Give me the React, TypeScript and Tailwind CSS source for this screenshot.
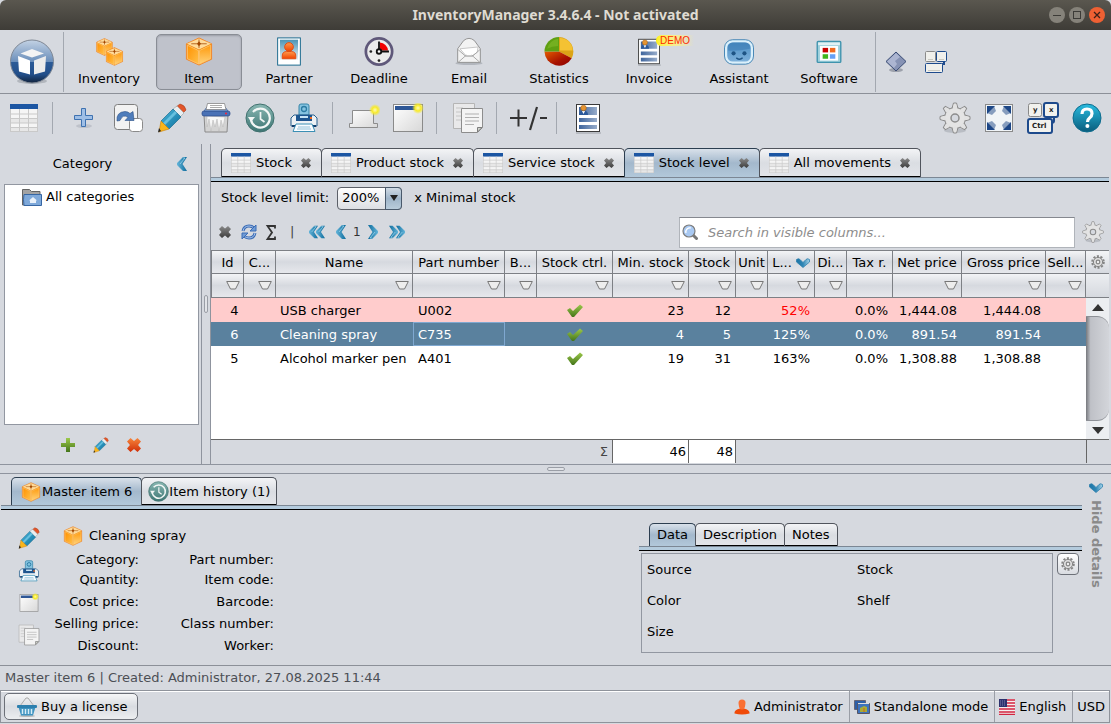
import React from 'react';

interface IconProps {
    className?: string;
}

// Gradients shared by all icons, referenced by id
const IconDefs: React.FC = () => (
    <svg className="absolute h-0 w-0" aria-hidden="true">
        <defs>
            <linearGradient id="blueOrb" x1="0" y1="0" x2="0" y2="1">
                <stop offset="0" stopColor="#c3d2e4" />
                <stop offset="0.5" stopColor="#6b8fbb" />
                <stop offset="0.52" stopColor="#2c5b97" />
                <stop offset="0.8" stopColor="#234f8a" />
                <stop offset="1" stopColor="#12233c" />
            </linearGradient>
            <linearGradient id="pencilBody" x1="0" y1="0" x2="1" y2="1">
                <stop offset="0" stopColor="#4cb8dc" />
                <stop offset="1" stopColor="#0d6f9c" />
            </linearGradient>
            <linearGradient id="orange" x1="0" y1="0" x2="1" y2="1">
                <stop offset="0" stopColor="#ff9100" />
                <stop offset="1" stopColor="#ffc04a" />
            </linearGradient>
            <linearGradient id="orangeLight" x1="0" y1="0" x2="0" y2="1">
                <stop offset="0" stopColor="#ff9a0c" />
                <stop offset="1" stopColor="#ffd27a" />
            </linearGradient>
            <linearGradient id="person" x1="0" y1="0" x2="0" y2="1">
                <stop offset="0" stopColor="#ff9a4d" />
                <stop offset="1" stopColor="#f04400" />
            </linearGradient>
            <linearGradient id="sky" x1="0" y1="0" x2="0" y2="1">
                <stop offset="0" stopColor="#4c94b4" />
                <stop offset="1" stopColor="#e4eff4" />
            </linearGradient>
            <linearGradient id="paper" x1="0" y1="0" x2="1" y2="1">
                <stop offset="0" stopColor="#ffffff" />
                <stop offset="1" stopColor="#d8d8d8" />
            </linearGradient>
            <linearGradient id="teal" x1="0" y1="0" x2="0" y2="1">
                <stop offset="0" stopColor="#8ab8b3" />
                <stop offset="1" stopColor="#3c7573" />
            </linearGradient>
            <linearGradient id="help" x1="0" y1="0" x2="0" y2="1">
                <stop offset="0" stopColor="#29bce0" />
                <stop offset="1" stopColor="#0a5c7c" />
            </linearGradient>
            <linearGradient id="green" x1="0" y1="0" x2="0" y2="1">
                <stop offset="0" stopColor="#9cc94a" />
                <stop offset="1" stopColor="#44751a" />
            </linearGradient>
            <linearGradient id="redCross" x1="0" y1="0" x2="0" y2="1">
                <stop offset="0" stopColor="#f7853b" />
                <stop offset="1" stopColor="#d02f08" />
            </linearGradient>
            <linearGradient id="chevron" x1="0" y1="0" x2="1" y2="0">
                <stop offset="0" stopColor="#65b5d9" />
                <stop offset="1" stopColor="#0d6b9c" />
            </linearGradient>
            <linearGradient id="chevronDown" x1="0" y1="0" x2="1" y2="0">
                <stop offset="0" stopColor="#1b74a6" />
                <stop offset="0.5" stopColor="#2f86b5" />
                <stop offset="1" stopColor="#a5d3e8" />
            </linearGradient>
            <linearGradient id="grayCross" x1="0" y1="0" x2="0" y2="1">
                <stop offset="0" stopColor="#8a8a8a" />
                <stop offset="1" stopColor="#3c3c3c" />
            </linearGradient>
            <linearGradient id="robot" x1="0" y1="0" x2="0" y2="1">
                <stop offset="0" stopColor="#4c8fc4" />
                <stop offset="1" stopColor="#7db0da" />
            </linearGradient>
            <linearGradient id="pieRed" x1="0" y1="0" x2="1" y2="1">
                <stop offset="0" stopColor="#e25a00" />
                <stop offset="0.6" stopColor="#a81200" />
                <stop offset="1" stopColor="#8a0000" />
            </linearGradient>
            <linearGradient id="bar" x1="0" y1="0" x2="1" y2="0">
                <stop offset="0" stopColor="#3f659d" />
                <stop offset="1" stopColor="#97acca" />
            </linearGradient>
            <radialGradient id="glow">
                <stop offset="0" stopColor="#fffbb0" />
                <stop offset="0.5" stopColor="#f7ea2a" />
                <stop offset="1" stopColor="#f7ea2a" stopOpacity="0" />
            </radialGradient>
        </defs>
    </svg>
);

const LogoIcon: React.FC<IconProps> = ({ className }) => (
    <svg viewBox="0 0 46 46" className={className}>
        <ellipse cx="23" cy="42" rx="15" ry="3" fill="#8e939c" opacity="0.5" />
        <circle cx="23" cy="22.500" r="21.500" fill="url(#blueOrb)" stroke="#7e8794" />
        <path d="M11.500 14.500 23 10l12 4.500-12 4z" fill="#f4f4f4" />
        <path d="M9 17l12 4.500v14L10 32.500z" fill="#fff" />
        <path d="M37 17L25 21.500v14l11-3z" fill="#ececec" />
    </svg>
);

const BoxIcon: React.FC<IconProps> = ({ className }) => (
    <svg viewBox="0 0 28 30" className={className}>
        <path d="M14 1L27 7v16l-13 6L1 23V7z" fill="#f28a0c" stroke="#f0862a" strokeLinejoin="round" />
        <path d="M14 1.500L26.500 7 14 13 1.500 7z" fill="#ffdb9a" />
        <path d="M2 8.500l11.500 5.500v14L2 22.500z" fill="url(#orange)" stroke="#ffd390" strokeWidth="0.700" />
        <path d="M26 8.500L14.500 14v14L26 22.500z" fill="url(#orangeLight)" stroke="#ffd07c" strokeWidth="0.700" />
        <path d="M14 2.500v9M6 7h16" stroke="#a34700" strokeWidth="0.800" />
        <path d="M12 7l2-2.500L16 7l-2 2.500z" fill="#a34700" />
    </svg>
);

const BoxesIcon: React.FC<IconProps> = ({ className }) => (
    <svg viewBox="0 0 32 32" className={className}>
        <svg x="1" y="1" width="20" height="20"><BoxIcon /></svg>
        <svg x="12" y="11" width="20" height="21"><BoxIcon /></svg>
    </svg>
);

const PartnerIcon: React.FC<IconProps> = ({ className }) => (
    <svg viewBox="0 0 32 32" className={className}>
        <rect x="3.500" y="1" width="25" height="30" fill="#fff" stroke="#0a5f86" />
        <rect x="6" y="3" width="20" height="22" fill="url(#sky)" />
        <path d="M8.500 24v-3q0-5 5-5h5q5 0 5 5v3z" fill="url(#person)" stroke="#e04a10" />
        <circle cx="16" cy="11" r="4.800" fill="url(#person)" stroke="#e04a10" />
    </svg>
);

const DeadlineIcon: React.FC<IconProps> = ({ className }) => (
    <svg viewBox="0 0 32 32" className={className}>
        <circle cx="16" cy="16" r="14.500" fill="#ececec" stroke="#5f587a" strokeWidth="3" />
        <path d="M17 15V6a10 10 0 0 1 9 9z" fill="#f20000" />
        <path d="M16 14V5M18 16h9" stroke="#111" strokeWidth="2" />
        <circle cx="16" cy="16" r="2.500" fill="#fff" stroke="#111" strokeWidth="2" />
        <circle cx="16" cy="26" r="1.500" fill="#222" />
        <circle cx="7" cy="16" r="1.500" fill="#222" />
    </svg>
);

const EmailIcon: React.FC<IconProps> = ({ className }) => (
    <svg viewBox="0 0 32 32" className={className}>
        <ellipse cx="16" cy="29" rx="15" ry="2" fill="#8e939c" opacity="0.5" />
        <path d="M3.500 13L10 4q6-5 12 0l6.500 9v15h-25z" fill="#f3f3f3" stroke="#8c8c8c" />
        <path d="M6 13l20-2-1 6-6 4h-6z" fill="#fff" stroke="#c2c2c2" />
        <path d="M4 14l8 7h8l8-7M4 28l9-8M28 28l-9-8" fill="none" stroke="#a2a2a2" />
    </svg>
);

const StatisticsIcon: React.FC<IconProps> = ({ className }) => (
    <svg viewBox="0 0 32 32" className={className}>
        <path d="M16 16V0a16 16 0 0 1 14 23.500z" fill="#dca416" />
        <path d="M16 16l14 7.500A16 16 0 0 1 0 16z" fill="url(#pieRed)" />
        <path d="M16 16H0A16 16 0 0 1 16 0z" fill="#5fa012" />
        <path d="M17 15V1a14 14 0 0 1 14 14z" fill="#f4c233" />
        <path d="M15 2v8Q8 10 3 13 5 4 15 2z" fill="#82bb2a" opacity="0.6" />
    </svg>
);

const InvoiceIcon: React.FC<IconProps> = ({ className }) => (
    <svg viewBox="0 0 32 32" className={className}>
        <path d="M4 31h25" stroke="#9ca0a7" />
        <rect x="4.500" y="2.500" width="23" height="27" fill="#fff" stroke="#3a3a3a" />
        <path d="M7 5h18v8H7zM7 16h18v4H7zM7 23h18v4H7z" fill="url(#bar)" />
        <path d="M7 13q0-4.500 4.500-4.500T16 13z" fill="#2c599a" />
        <path d="M10 9h3l-1.500 3z" fill="#fff" />
        <circle cx="11.500" cy="6" r="2.800" fill="#e59432" stroke="#a35c0d" strokeWidth="0.500" />
    </svg>
);

const AssistantIcon: React.FC<IconProps> = ({ className }) => (
    <svg viewBox="0 0 34 32" className={className}>
        <rect x="1" y="3" width="32" height="27" rx="9" fill="#dbf0fb" stroke="#3a7eaf" />
        <rect x="4" y="6" width="26" height="21" rx="6" fill="url(#robot)" />
        <path d="M5 15V11q0-5 6-5h12q6 0 6 5v2q-14 3-24 2z" fill="#3d7db5" opacity="0.6" />
        <circle cx="11" cy="18" r="2.300" fill="#1e5484" />
        <circle cx="23" cy="18" r="2.300" fill="#1e5484" />
        <path d="M14 23q4 3 7 0" fill="none" stroke="#1e5484" strokeWidth="1.500" />
    </svg>
);

const SoftwareIcon: React.FC<IconProps> = ({ className }) => (
    <svg viewBox="0 0 32 32" className={className}>
        <rect x="3" y="5" width="26" height="23" rx="1" fill="#9fd0dc" stroke="#3f93ad" strokeWidth="1.500" />
        <path d="M4 6h24v3H4z" fill="#e1f1f4" />
        <rect x="6" y="10" width="20" height="16" fill="#fff" />
        <path d="M9 12h6v5H9z" fill="#c80000" />
        <path d="M17 12h6v5h-6z" fill="#f16a1e" />
        <path d="M9 19h6v5H9z" fill="#3fb51e" />
        <path d="M17 19h6v5h-6z" fill="#66a0f5" />
    </svg>
);

const DiamondIcon: React.FC<IconProps> = ({ className }) => (
    <svg viewBox="0 0 22 22" className={className}>
        <ellipse cx="11" cy="19" rx="7" ry="2" fill="#777c88" opacity="0.6" />
        <path d="M11 1l10 9.500L11 20 1 10.500z" fill="#8692b4" stroke="#394b74" />
        <path d="M11 2l4 4-5 4 2 3-3 4-7-6.500z" fill="#bcc5dd" opacity="0.7" />
    </svg>
);

const KeysIcon: React.FC<IconProps> = ({ className }) => (
    <svg viewBox="0 0 22 22" className={className}>
        <path d="M19 10v3h-2" fill="none" stroke="#1d4a8c" strokeWidth="2" />
        <rect x="0.500" y="0.500" width="10" height="10" rx="1" fill="#f0f0ec" stroke="#8b8b8b" />
        <rect x="11.500" y="0.500" width="10" height="10" rx="1" fill="#f0f0ec" stroke="#1d4a8c" />
        <rect x="0.500" y="12.500" width="17" height="9" rx="1" fill="#f0f0ec" stroke="#1d4a8c" />
        <path d="M3 8.500h5M14 8.500h5M3 19.500h12" stroke="#c9c9c2" />
    </svg>
);

const SheetIcon: React.FC<IconProps> = ({ className }) => (
    <svg viewBox="0 0 28 28" className={className}>
        <rect width="28" height="28" fill="#f5f5f5" />
        <path d="M0 15h28v4H0zM0 23h28v4H0z" fill="#e7e7e7" />
        <rect width="28" height="5" fill="#1c56a3" />
        <path d="M0 10h28M0 14.500h28M0 19h28M0 23.500h28M0 27.500h28M.5 5v23M9.500 5v23M18.500 5v23M27.500 5v23" stroke="#c9c9c9" fill="none" />
    </svg>
);

const BluePlusIcon: React.FC<IconProps> = ({ className }) => (
    <svg viewBox="0 0 22 22" className={className}>
        <ellipse cx="11" cy="19" rx="8" ry="2" fill="#9aa0ab" opacity="0.4" />
        <path d="M8.500 1.500h4v7h7v4h-7v7h-4v-7h-7v-4h7z" fill="#9fbfe6" stroke="#3f72b0" />
    </svg>
);

const DuplicateIcon: React.FC<IconProps> = ({ className }) => (
    <svg viewBox="0 0 30 30" className={className}>
        <rect x="1.500" y="1.500" width="23" height="25" rx="3" fill="#f2f2f2" stroke="#7d7d7d" />
        <rect x="16.500" y="15.500" width="13" height="13" rx="3" fill="#fff" stroke="#8a8a8a" />
        <path d="M4 18Q3 9 12 8.500q3 0 5 2l3-2 1 9h-9l3-3q-5-4-8 3z" fill="#4f7dbb" stroke="#284f86" strokeWidth="0.600" />
    </svg>
);

const PencilIcon: React.FC<IconProps> = ({ className }) => (
    <svg viewBox="0 0 30 30" className={className}>
        <path d="M19 4l4-3q5 1 6 6l-4 4z" fill="#e2552a" stroke="#a6401e" strokeWidth="0.600" />
        <path d="M16 6l4-3 7 7-4 4z" fill="#e9eef0" stroke="#97a0a3" strokeWidth="0.600" />
        <path d="M4 18L16 6l8 8-12 12z" fill="url(#pencilBody)" stroke="#0c5f83" strokeWidth="0.600" />
        <path d="M6 20L18 8l2 2L8 22z" fill="#7dd2ec" opacity="0.7" />
        <path d="M4 18l8 8-10 3z" fill="#f9b51b" stroke="#c77f08" strokeWidth="0.600" />
        <path d="M2 25l2 3-3 1.500z" fill="#222" />
    </svg>
);

const ShredderIcon: React.FC<IconProps> = ({ className }) => (
    <svg viewBox="0 0 30 30" className={className}>
        <path d="M3 12h24l-1 17H4z" fill="#d3d3d3" stroke="#8a8a8a" />
        <path d="M6 13v11l2-8 2 12 2-11 2 7 2-8 2 12 2-11 2 7 2-10z" fill="#f7f7f7" stroke="#b5b5b5" strokeWidth="0.500" />
        <rect x="1" y="8" width="28" height="5" rx="2" fill="#4a72b6" stroke="#28478a" strokeWidth="0.700" />
        <path d="M3 8l3-4h18l3 4z" fill="#85a3d4" stroke="#385b9a" strokeWidth="0.700" />
        <path d="M6.500 0.500h17l1.500 6H5z" fill="#fff" stroke="#777" strokeWidth="0.700" />
        <path d="M9 2.500h12M9 4.500h12" stroke="#aaa" />
        <circle cx="25" cy="10.500" r="1" fill="#f23" />
    </svg>
);

const HistoryIcon: React.FC<IconProps> = ({ className }) => (
    <svg viewBox="0 0 30 30" className={className}>
        <circle cx="15" cy="15" r="14" fill="url(#teal)" stroke="#41716f" />
        <path d="M6 17a9.500 9.500 0 1 0 2-8" fill="none" stroke="#f2f6f5" strokeWidth="2.200" />
        <path d="M3 14h7l-4 5z" fill="#f2f6f5" />
        <path d="M15.500 9v7l4 3" fill="none" stroke="#f2f6f5" strokeWidth="1.700" />
    </svg>
);

const PrinterIcon: React.FC<IconProps> = ({ className }) => (
    <svg viewBox="0 0 30 30" className={className}>
        <path d="M10 12V3q0-2 2-2h6q2 0 2 2v9z" fill="#85c3e0" stroke="#3785a8" />
        <circle cx="15" cy="6" r="2.500" fill="none" stroke="#2b7ba2" strokeWidth="1.300" />
        <path d="M5 12h20l3 3v8H2v-8z" fill="#edf1f4" stroke="#275f8c" />
        <path d="M7 12h16v6H7z" fill="#1e568f" />
        <path d="M11 13h8v2h-8z" fill="#c7e5f5" />
        <path d="M21 14h2v2h-2z" fill="#f36c22" />
        <path d="M3 22h24v2H3z" fill="#123d6d" />
        <path d="M7 21h16l3 7.500H4z" fill="#f9fcff" stroke="#3b8fb4" />
        <path d="M9 24h12M8 26h14" stroke="#93c2d9" />
    </svg>
);

const CardIcon: React.FC<IconProps> = ({ className }) => (
    <svg viewBox="0 0 32 30" className={className}>
        <path d="M4.500 7.500h21v13h4v4h-28v-4h3z" fill="url(#paper)" stroke="#8c8c8c" />
        <circle cx="27" cy="7" r="6" fill="url(#glow)" />
    </svg>
);

const WindowIcon: React.FC<IconProps> = ({ className }) => (
    <svg viewBox="0 0 32 30" className={className}>
        <rect x="1.500" y="1.500" width="29" height="27" fill="url(#paper)" stroke="#8a8a8a" />
        <path d="M3 3h26v4H3z" fill="#2d5696" />
        <circle cx="26" cy="5" r="6" fill="url(#glow)" />
    </svg>
);

const DocumentsIcon: React.FC<IconProps> = ({ className }) => (
    <svg viewBox="0 0 32 32" className={className}>
        <path d="M1.500 1.500h21v25h-21z" fill="#e9e9ea" stroke="#b5b5b5" />
        <path d="M4 6h7M4 10h5M4 14h5M4 18h5" stroke="#c5c5c5" />
        <path d="M9.500 6.500h21v19l-5 5h-16z" fill="#f4f4f4" stroke="#8d8d8d" />
        <path d="M30 25.500h-4.500V30z" fill="#d0d3cc" stroke="#7d7d7d" />
        <path d="M13 12h14M13 15.500h14M13 19h14M13 22.500h9" stroke="#b0b0b0" />
    </svg>
);

const PlusMinusIcon: React.FC<IconProps> = ({ className }) => (
    <svg viewBox="0 0 38 26" className={className}>
        <path d="M1 13h17M9.500 4.500v17M31 13h7" stroke="#333" strokeWidth="2" />
        <path d="M28 2l-7 23" stroke="#333" strokeWidth="2.200" />
    </svg>
);

const GEAR_ANGLES = [0, 45, 90, 135, 180, 225, 270, 315];

const GearIcon: React.FC<IconProps> = ({ className }) => (
    <svg viewBox="0 0 32 32" className={className}>
        <ellipse cx="16" cy="28.500" rx="11" ry="2.500" fill="#8e939c" opacity="0.4" />
        <g fill="#e2e2e2" stroke="#8c8c8c">
            {GEAR_ANGLES.map((angle) => (
                <path key={angle} d="M12.500 8L14.500 1h3l2 7z" strokeLinejoin="round" transform={`rotate(${angle} 16 16)`} />
            ))}
            <circle cx="16" cy="16" r="10.500" />
        </g>
        <g fill="#e2e2e2">
            {GEAR_ANGLES.map((angle) => (
                <path key={angle} d="M13.200 8L15 2h2l1.800 6z" transform={`rotate(${angle} 16 16)`} />
            ))}
            <circle cx="16" cy="16" r="9" fill="#e4e4e4" />
        </g>
        <circle cx="16" cy="16" r="4" fill="#d6d9df" stroke="#8c8c8c" strokeWidth="1.500" />
    </svg>
);

const SmallGearIcon: React.FC<IconProps> = ({ className }) => (
    <svg viewBox="0 0 14 14" className={className}>
        <circle cx="7" cy="7" r="5.800" fill="none" stroke="#858585" strokeWidth="2" strokeDasharray="2.100 1.540" />
        <circle cx="7" cy="7" r="4.600" fill="#dcdcdc" stroke="#858585" />
        <circle cx="7" cy="7" r="1.800" fill="#eee" stroke="#858585" strokeWidth="1.200" />
    </svg>
);

const FullscreenIcon: React.FC<IconProps> = ({ className }) => (
    <svg viewBox="0 0 30 30" className={className}>
        <rect x="1.500" y="1.500" width="27" height="27" fill="#f0f4f7" stroke="#8a8a8a" />
        <path d="M3 3h8L3 11zM27 3h-8l8 8zM3 27h8l-8-8zM27 27h-8l8-8z" fill="#1c4686" />
        <path d="M3 3h7l2 5-4 4-5-2zM27 3h-7l-2 5 4 4 5-2zM3 27h7l2-5-4-4-5 2zM27 27h-7l-2-5 4-4 5 2z" fill="#1c4686" opacity="0.5" />
    </svg>
);

const ShortcutIcon: React.FC<IconProps> = ({ className }) => (
    <svg viewBox="0 0 32 32" className={className}>
        <path d="M27 15v4q0 2-3 2" fill="none" stroke="#1d4a8c" strokeWidth="2" />
        <rect x="1.500" y="1.500" width="13" height="13" rx="2" fill="#f2f2ee" stroke="#888" />
        <rect x="17" y="1" width="14" height="14" rx="2" fill="#f2f2ee" stroke="#1d4a8c" strokeWidth="2" />
        <rect x="1" y="17" width="24" height="14" rx="2" fill="#f2f2ee" stroke="#1d4a8c" strokeWidth="2" />
        <g fontFamily="DejaVu Sans" fontWeight="bold" fontSize="7" fill="#222">
            <text x="6" y="10">y</text>
            <text x="22" y="10">x</text>
            <text x="5" y="26">Ctrl</text>
        </g>
    </svg>
);

const HelpIcon: React.FC<IconProps> = ({ className }) => (
    <svg viewBox="0 0 30 30" className={className}>
        <circle cx="15" cy="15" r="14" fill="url(#help)" stroke="#0d6c8e" />
        <path d="M10 11q0-5 5-5t5 4.500q0 2.500-2.500 4.500-2 1.500-2 4" fill="none" stroke="#fff" strokeWidth="3.200" />
        <circle cx="15.400" cy="23" r="2" fill="#fff" />
    </svg>
);

const ChevronIcon: React.FC<IconProps> = ({ className }) => (
    <svg viewBox="0 0 10 14" className={className}>
        <path d="M6 0h4L5.500 7l4.500 7H6L0 8V6z" fill="url(#chevron)" />
        <path d="M6 1h2L3 7" fill="none" stroke="#a9dcf0" strokeWidth="0.700" />
    </svg>
);

const ChevronDownIcon: React.FC<IconProps> = ({ className }) => (
    <svg viewBox="0 0 14 10" className={className}>
        <path d="M.5 1.500q2-1.500 3.500 0l3 3 3-3q1.500-1.500 3.500 0V4L7 9.500.5 4z" fill="url(#chevronDown)" stroke="#2d80ad" strokeWidth="0.800" />
    </svg>
);

const CrossIcon: React.FC<IconProps & { fill?: string }> = ({ className, fill = 'url(#grayCross)' }) => (
    <svg viewBox="0 0 12 12" className={className}>
        <path d="M3 0L6 2.500 9 0l3 3-2.500 3L12 9l-3 3-3-2.500L3 12 0 9l2.500-3L0 3z" fill={fill} />
    </svg>
);

const GreenPlusIcon: React.FC<IconProps> = ({ className }) => (
    <svg viewBox="0 0 14 14" className={className}>
        <path d="M5 0h4v5h5v4H9v5H5V9H0V5h5z" fill="url(#green)" />
    </svg>
);

const CheckIcon: React.FC<IconProps> = ({ className }) => (
    <svg viewBox="0 0 16 13" className={className}>
        <path d="M0 6l3-2 3 3 7-6.500L16 3 7 13H5z" fill="url(#green)" />
    </svg>
);

const RefreshIcon: React.FC<IconProps> = ({ className }) => (
    <svg viewBox="0 0 16 16" className={className}>
        <path d="M2 7q1-5 6-5 3 0 5 2" fill="none" stroke="#3b6cb5" strokeWidth="3" />
        <path d="M2 7q1-5 6-5 3 0 5 2" fill="none" stroke="#a8c5ec" strokeWidth="1" />
        <path d="M15 1v6H9z" fill="#6f9bd5" stroke="#3b6cb5" />
        <path d="M14 9q-1 5-6 5-3 0-5-2" fill="none" stroke="#3b6cb5" strokeWidth="3" />
        <path d="M14 9q-1 5-6 5-3 0-5-2" fill="none" stroke="#a8c5ec" strokeWidth="1" />
        <path d="M1 15V9h6z" fill="#6f9bd5" stroke="#3b6cb5" />
    </svg>
);

const SumIcon: React.FC<IconProps> = ({ className }) => (
    <svg viewBox="0 0 10 15" className={className}>
        <path d="M9 3.500V1H1.500L6 7.500 1.500 14H9v-2.500" fill="none" stroke="#333" strokeWidth="1.800" />
    </svg>
);

const MagnifierIcon: React.FC<IconProps> = ({ className }) => (
    <svg viewBox="0 0 16 16" className={className}>
        <path d="M11 11l3.500 3.500" stroke="#777" strokeWidth="3" strokeLinecap="round" />
        <circle cx="7" cy="7" r="6" fill="#a9c9f2" stroke="#7c7c7c" strokeWidth="1.200" />
        <path d="M4 9a4 4 0 0 1 5-5" fill="none" stroke="#fff" strokeWidth="1.300" />
    </svg>
);

const FolderIcon: React.FC<IconProps> = ({ className }) => (
    <svg viewBox="0 0 20 19" className={className}>
        <path d="M.5 17V1.500h7l2 2H18V17z" fill="#a3a3a3" stroke="#646464" />
        <path d="M2 6.500h17.500v11H2q-1-6 0-11z" fill="#7fa9da" stroke="#3767a4" />
        <path d="M11 9l4 3.500h-1V15H8v-2.500H7z" fill="#e9f1fa" />
    </svg>
);

const FunnelIcon: React.FC<IconProps> = ({ className }) => (
    <svg viewBox="0 0 14 9" className={className}>
        <path d="M.7.5h12.600L9.500 8h-5z" fill="#ededed" stroke="#777" />
    </svg>
);

const UserIcon: React.FC<IconProps> = ({ className }) => (
    <svg viewBox="0 0 16 16" className={className}>
        <path d="M.5 14.500Q0 11 6 9.500h4q6 1.500 5.500 5-7.500 2-15 0z" fill="#f04a08" />
        <path d="M4.500 4a3.500 3.500 0 0 1 7 0q0 4-2 6.500h-3Q4.500 8 4.500 4z" fill="#fa7034" />
    </svg>
);

const ModeIcon: React.FC<IconProps> = ({ className }) => (
    <svg viewBox="0 0 16 14" className={className}>
        <path d="M.5.500h11v9H.5z" fill="#2c5fa8" stroke="#667" />
        <path d="M3.500 3.500h12v10h-12z" fill="#3d73bd" stroke="#556" />
        <path d="M4 3.500h11" stroke="#ddd" />
        <path d="M6 12V8l4-2 3 1v5z" fill="#a7ab36" />
        <path d="M10 8v4" stroke="#d65d19" />
    </svg>
);

const FlagIcon: React.FC<IconProps> = ({ className }) => (
    <svg viewBox="0 0 16 16" className={className}>
        <rect width="16" height="16" fill="#f4f0f0" />
        <path d="M0 1h16M0 4h16M0 7h16M0 10h16M0 13h16M0 15.500h16" stroke="#d22540" strokeWidth="1.300" />
        <rect width="8" height="8" fill="#2d326e" />
        <path d="M1 2h6M1 4h6M1 6h6" stroke="#a2a5cc" strokeWidth="0.700" strokeDasharray="1 1" />
    </svg>
);

const BasketIcon: React.FC<IconProps> = ({ className }) => (
    <svg viewBox="0 0 20 20" className={className}>
        <path d="M3 9l6-8h2l6 8" fill="none" stroke="#aaa" />
        <ellipse cx="10" cy="19" rx="8" ry="1" fill="#999" opacity="0.6" />
        <path d="M1.500 10h17L16 18.500H4z" fill="#3f93c0" />
        <path d="M5.500 12v5M8.500 12v5M11.500 12v5M14.500 12v5" stroke="#d7edf7" strokeWidth="1.500" />
        <rect x="0" y="8" width="20" height="3" rx="1" fill="#2c7fae" />
    </svg>
);

const MAIN_BUTTONS = [
    { label: 'Inventory', icon: BoxesIcon },
    { label: 'Item', icon: BoxIcon, active: true },
    { label: 'Partner', icon: PartnerIcon },
    { label: 'Deadline', icon: DeadlineIcon },
    { label: 'Email', icon: EmailIcon },
    { label: 'Statistics', icon: StatisticsIcon },
    { label: 'Invoice', icon: InvoiceIcon, demo: true },
    { label: 'Assistant', icon: AssistantIcon },
    { label: 'Software', icon: SoftwareIcon },
];

const STOCK_TABS = ['Stock', 'Product stock', 'Service stock', 'Stock level', 'All movements'];

interface Column {
    title: string;
    width: string;
    filter?: boolean;
    sorted?: boolean;
}

const COLUMNS: Column[] = [
    { title: 'Id', width: 'w-[33px]', filter: true },
    { title: 'C...', width: 'w-[32px]', filter: true },
    { title: 'Name', width: '', filter: true },
    { title: 'Part number', width: 'w-[92px]', filter: true },
    { title: 'B...', width: 'w-[32px]', filter: true },
    { title: 'Stock ctrl.', width: 'w-[76px]', filter: true },
    { title: 'Min. stock', width: 'w-[76px]', filter: true },
    { title: 'Stock', width: 'w-[47px]', filter: true },
    { title: 'Unit', width: 'w-[32px]', filter: true },
    { title: 'L...', width: 'w-[47px]', filter: true, sorted: true },
    { title: 'Di...', width: 'w-[32px]', filter: true },
    { title: 'Tax r.', width: 'w-[46px]' },
    { title: 'Net price', width: 'w-[69px]', filter: true },
    { title: 'Gross price', width: 'w-[84px]', filter: true },
    { title: 'Sell...', width: 'w-[40px]', filter: true },
];

const ITEMS = [
    { id: 4, name: 'USB charger', part: 'U002', min: 23, stock: 12, level: '52%', tax: '0.0%', net: '1,444.08', gross: '1,444.08', low: true },
    { id: 6, name: 'Cleaning spray', part: 'C735', min: 4, stock: 5, level: '125%', tax: '0.0%', net: '891.54', gross: '891.54', selected: true },
    { id: 5, name: 'Alcohol marker pen', part: 'A401', min: 19, stock: 31, level: '163%', tax: '0.0%', net: '1,308.88', gross: '1,308.88' },
];

const Separator: React.FC = () => <div className="mr-[9px] ml-1.5 h-8 w-px bg-[#a3a8b0]" />;

const ToolButton: React.FC<{ title: string; children: React.ReactNode }> = ({ title, children }) => (
    <button title={title} className="flex h-10 w-11 items-center justify-center">{children}</button>
);

const TitleBar: React.FC = () => (
    <header className="flex h-[30px] items-center rounded-t-md bg-linear-to-b from-[#5a574f] to-[#3e3c37] px-1.5">
        <h1 className="flex-1 pl-14 text-center font-['Noto_Sans'] text-sm font-bold text-[#dfdbd2]">InventoryManager 3.4.6.4 - Not activated</h1>
        <div className="flex gap-1">
            <button title="Minimize" className="flex size-4 items-center justify-center rounded-full bg-[#85827a]">
                <span className="h-px w-2 bg-[#3c3b37]" />
            </button>
            <button title="Maximize" className="flex size-4 items-center justify-center rounded-full bg-[#85827a]">
                <span className="size-2 border border-[#3c3b37]" />
            </button>
            <button title="Close" className="flex size-4 items-center justify-center rounded-full bg-[#ee6033]">
                <svg viewBox="0 0 8 8" className="size-2"><path d="M1 1l6 6M7 1L1 7" stroke="#3c2018" strokeWidth="1.300" /></svg>
            </button>
        </div>
    </header>
);

const MainToolbar: React.FC = () => (
    <nav className="flex h-16 items-center border-b border-[#8c9098]">
        <button title="Home" className="flex w-[63px] justify-center"><LogoIcon className="size-[46px]" /></button>
        <div className="mr-0.5 h-[60px] w-px bg-[#a3a8b0]" />
        <div className="flex gap-1">
            {MAIN_BUTTONS.map(({ label, icon: Icon, active, demo }) => (
                <button
                    key={label}
                    className={`relative flex h-14 w-[86px] flex-col items-center rounded-[5px] border pt-0.5 ${active ? 'border-[#898d95] bg-[#bfc2cb] shadow-[inset_0_1px_2px_#9a9da6]' : 'border-transparent'}`}
                >
                    <Icon className="h-8 w-8" />
                    <span className="pt-[3px] leading-5">{label}</span>
                    {demo && (
                        <span className="absolute top-0 left-[49px] rounded-l-md bg-linear-to-r from-[#fff200] via-[#f7ee90] to-transparent px-1 font-['Liberation_Sans'] text-[10px] leading-[11px] text-[#ff2a00]">DEMO</span>
                    )}
                </button>
            ))}
        </div>
        <div className="ml-[3px] h-[60px] w-px bg-[#a3a8b0]" />
        <button title="Release notes" className="ml-2 flex w-6 justify-center"><DiamondIcon className="size-[22px]" /></button>
        <button title="Layout" className="ml-4 flex w-6 justify-center"><KeysIcon className="size-[22px]" /></button>
    </nav>
);

const ItemToolbar: React.FC = () => (
    <div className="flex h-[50px] items-center pr-0.5 pb-0.5 pl-0.5">
        <ToolButton title="Table"><SheetIcon className="size-7" /></ToolButton>
        <Separator />
        <ToolButton title="Add"><BluePlusIcon className="size-[22px]" /></ToolButton>
        <ToolButton title="Duplicate"><DuplicateIcon className="size-[30px]" /></ToolButton>
        <ToolButton title="Edit"><PencilIcon className="size-[30px]" /></ToolButton>
        <ToolButton title="Delete"><ShredderIcon className="size-[30px]" /></ToolButton>
        <ToolButton title="History"><HistoryIcon className="size-[30px]" /></ToolButton>
        <ToolButton title="Print"><PrinterIcon className="size-[30px]" /></ToolButton>
        <Separator />
        <ToolButton title="New card"><CardIcon className="h-[30px] w-8" /></ToolButton>
        <ToolButton title="New window"><WindowIcon className="h-[30px] w-8" /></ToolButton>
        <Separator />
        <ToolButton title="Copy"><DocumentsIcon className="size-8" /></ToolButton>
        <Separator />
        <ToolButton title="Stock change"><PlusMinusIcon className="h-[26px] w-[38px]" /></ToolButton>
        <Separator />
        <ToolButton title="Create invoice"><InvoiceIcon className="size-8" /></ToolButton>
        <div className="flex-1" />
        <ToolButton title="Settings"><GearIcon className="size-8" /></ToolButton>
        <ToolButton title="Full screen"><FullscreenIcon className="size-[30px]" /></ToolButton>
        <ToolButton title="Shortcuts"><ShortcutIcon className="size-8" /></ToolButton>
        <ToolButton title="Help"><HelpIcon className="size-[30px]" /></ToolButton>
    </div>
);

const CategoryPanel: React.FC = () => (
    <aside className="flex w-[201px] flex-col">
        <div className="flex h-10 items-center pr-3.5">
            <h2 className="flex-1 pr-3 text-center">Category</h2>
            <button title="Collapse"><ChevronIcon className="h-3.5 w-2.5" /></button>
        </div>
        <ul className="mr-0.5 ml-1 flex-1 border border-[#9297a1] bg-white">
            <li className="flex h-6 items-center gap-1 pl-[17px]"><FolderIcon className="h-[19px] w-5" />All categories</li>
        </ul>
        <div className="flex h-[39px] items-center justify-center gap-[18px]">
            <button title="Add category"><GreenPlusIcon className="size-3.5" /></button>
            <button title="Edit category"><PencilIcon className="size-4" /></button>
            <button title="Delete category"><CrossIcon className="size-3.5" fill="url(#redCross)" /></button>
        </div>
    </aside>
);

const TabStrip: React.FC<{ children: React.ReactNode }> = ({ children }) => (
    <div>
        <div role="tablist" className="flex pl-2.5">{children}</div>
        <div className="h-[5px] border-t border-b border-t-[#7c8794] border-b-black bg-[#b4cbdd]" />
    </div>
);

const Tab: React.FC<{ active?: boolean; className?: string; children: React.ReactNode }> = ({ active, className = '', children }) => (
    <button
        role="tab"
        aria-selected={!!active}
        className={`-mr-px flex items-center rounded-t-[5px] border border-b-0 whitespace-nowrap ${active ? 'border-[#2c3e50] bg-linear-to-b from-[#d9e1ea] via-[#a3b8cc] to-[#b2c8da]' : 'border-[#50545c] bg-linear-to-b from-[#f3f4f6] via-[#dadde2] to-[#e3e5e9] shadow-[inset_0_-1px_0_#000]'} ${className}`}
    >
        {children}
    </button>
);

const StockTable: React.FC = () => {
    const headCell = 'border-r border-b border-[#7d8085] bg-linear-to-b from-[#f3f4f6] via-[#d6d9df] to-[#e6e8ec] p-0 font-normal first:border-l';

    return (
        <table className="h-full min-w-0 flex-1 table-fixed border-separate border-spacing-0 whitespace-nowrap">
            <colgroup>
                {COLUMNS.map((col) => <col key={col.title} className={col.width} />)}
            </colgroup>
            <thead>
                <tr className="h-6">
                    {COLUMNS.map((col) => (
                        <th key={col.title} className={`h-6 overflow-hidden border-t ${headCell}`}>
                            <span className="flex items-center justify-center pt-px leading-5">
                                {col.title}
                                {col.sorted && <ChevronDownIcon className="ml-1 h-2.5 w-3.5 shrink-0" />}
                            </span>
                        </th>
                    ))}
                </tr>
                <tr className="h-6">
                    {COLUMNS.map((col) => (
                        <td key={col.title} className={`h-6 ${headCell}`}>
                            {col.filter && (
                                <button title={`Filter ${col.title}`} className="mr-[3px] ml-auto block"><FunnelIcon className="h-[9px] w-3.5" /></button>
                            )}
                        </td>
                    ))}
                </tr>
            </thead>
            <tbody>
                {ITEMS.map((item) => (
                    <tr key={item.id} className={`h-6 ${item.selected ? 'bg-[#5a819e] text-white' : item.low ? 'bg-[#ffcccc]' : 'bg-white'}`}>
                        <td className="p-0 pt-0.5 pl-3.5 text-center">{item.id}</td>
                        <td />
                        <td className="p-0 pt-0.5 pl-1">{item.name}</td>
                        <td className={`border p-0 pt-0.5 pl-1 ${item.selected ? 'border-[#7fa8d0]' : 'border-transparent'}`}>{item.part}</td>
                        <td />
                        <td className="p-0"><CheckIcon className="mx-auto h-[13px] w-4" /></td>
                        <td className="p-0 pt-0.5 pr-[5px] text-right">{item.min}</td>
                        <td className="p-0 pt-0.5 pr-[5px] text-right">{item.stock}</td>
                        <td />
                        <td className={`p-0 pt-0.5 pr-[5px] text-right ${item.low ? 'text-[#ff0000]' : ''}`}>{item.level}</td>
                        <td />
                        <td className="p-0 pt-0.5 pr-[5px] text-right">{item.tax}</td>
                        <td className="p-0 pt-0.5 pr-[5px] text-right">{item.net}</td>
                        <td className="p-0 pt-0.5 pr-[5px] text-right">{item.gross}</td>
                        <td />
                    </tr>
                ))}
                <tr className="bg-white"><td colSpan={COLUMNS.length} /></tr>
            </tbody>
            <tfoot>
                <tr className="h-6">
                    <td colSpan={6} className="h-6 border-t border-r border-[#666] p-0 pr-1 text-right text-[#444]">Σ</td>
                    <td className="border-t border-r border-[#666] bg-white p-0 pr-0.5 text-right">46</td>
                    <td className="border-t border-r border-[#666] bg-white p-0 pr-0.5 text-right">48</td>
                    <td colSpan={7} className="border-t border-[#666]" />
                </tr>
            </tfoot>
        </table>
    );
};

const ScrollColumn: React.FC = () => (
    <div className="flex w-[23px] flex-col">
        <button title="Columns" className="flex h-6 items-center justify-center border-t border-b border-[#7d8085] bg-linear-to-b from-[#f3f4f6] to-[#d6d9df]">
            <SmallGearIcon className="size-3.5" />
        </button>
        <div className="h-6 border-b border-[#7d8085] bg-linear-to-b from-[#eceef1] to-[#d6d9df]" />
        <div className="flex flex-1 flex-col bg-[#eceef1]">
            <button title="Scroll up" className="flex h-[18px] items-center justify-center">
                <svg viewBox="0 0 12 7" className="h-[7px] w-3"><path d="M6 0l6 7H0z" fill="#333" /></svg>
            </button>
            <div className="flex-1 rounded-r-[12px] border-y border-[#8d9096] bg-linear-to-r from-[#77797e] via-[#bfc1c7] via-20% to-[#d3d5da]" />
            <button title="Scroll down" className="flex h-[18px] items-center justify-center">
                <svg viewBox="0 0 12 7" className="h-[7px] w-3"><path d="M0 0h12L6 7z" fill="#333" /></svg>
            </button>
        </div>
        <div className="h-6 border-t border-l border-[#666]" />
    </div>
);

const StockPanel: React.FC = () => (
    <section className="flex min-w-0 flex-1 flex-col pt-1 pr-0.5 pb-px">
        <TabStrip>
            {STOCK_TABS.map((name) => (
                <Tab key={name} active={name === 'Stock level'} className="h-[29px] pr-2.5 pl-[9px]">
                    <SheetIcon className="mr-[5px] size-5" />
                    {name}
                    <CrossIcon className="ml-[9px] size-2.5" />
                </Tab>
            ))}
        </TabStrip>
        <div className="flex h-8 items-center pl-2.5">
            <label htmlFor="limit">Stock level limit:</label>
            <div className="relative ml-2">
                <select id="limit" defaultValue="200%" className="h-[23px] w-[65px] appearance-none rounded-[4px] border border-[#5c6068] bg-linear-to-b from-white to-[#dcdfe3] pl-1 leading-5">
                    <option>200%</option>
                </select>
                <span className="pointer-events-none absolute inset-y-0 right-0 flex w-[17px] items-center justify-center rounded-r-[4px] border border-[#49596b] bg-linear-to-b from-[#d0dae4] via-[#9fb5c9] to-[#b9ccdb]">
                    <svg viewBox="0 0 8 6" className="h-1.5 w-2"><path d="M0 0h8L4 6z" fill="#222" /></svg>
                </span>
            </div>
            <span className="ml-3">x Minimal stock</span>
        </div>
        <div className="flex h-9 items-center pl-2">
            <button title="Clear"><CrossIcon className="size-3" /></button>
            <button title="Refresh" className="ml-2.5"><RefreshIcon className="size-4" /></button>
            <button title="Sum" className="ml-2"><SumIcon className="h-[15px] w-3" /></button>
            <span className="ml-[13px] w-1 text-[#444]">|</span>
            <button title="First page" className="ml-[15px] flex"><ChevronIcon className="h-3.5 w-[9px]" /><ChevronIcon className="-ml-0.5 h-3.5 w-[9px]" /></button>
            <button title="Previous page" className="ml-[11px]"><ChevronIcon className="h-3.5 w-2.5" /></button>
            <span className="ml-[7px] text-xs text-[#333]">1</span>
            <button title="Next page" className="ml-[7px]"><ChevronIcon className="h-3.5 w-2.5 rotate-180" /></button>
            <button title="Last page" className="ml-[11px] flex"><ChevronIcon className="h-3.5 w-[9px] rotate-180" /><ChevronIcon className="-ml-0.5 h-3.5 w-[9px] rotate-180" /></button>
            <div className="ml-auto flex h-[31px] w-[396px] items-center border border-[#b0b4ba] border-t-[#85888f] bg-white pl-0.5">
                <MagnifierIcon className="size-4" />
                <input type="search" aria-label="Search" placeholder="Search in visible columns..." className="ml-2.5 min-w-0 flex-1 pt-0.5 italic outline-none placeholder:text-[#8d8d8d]" />
            </div>
            <button title="Table settings" className="mr-[5px] ml-[7px]"><GearIcon className="size-[22px]" /></button>
        </div>
        <div className="flex flex-1">
            <StockTable />
            <ScrollColumn />
        </div>
    </section>
);

const LabelColumn: React.FC<{ labels: string[]; className: string }> = ({ labels, className }) => (
    <dl className={`text-right whitespace-nowrap ${className}`}>
        {labels.map((label) => (
            <dt key={label} className="flex h-[22px] items-center justify-end first:h-[18px]">{label}</dt>
        ))}
    </dl>
);

const DetailsPanel: React.FC = () => (
    <section className="flex h-[192px] border-b border-[#8c9098] px-px pt-[3px]">
        <div className="flex min-w-0 flex-1 flex-col">
            <TabStrip>
                <Tab active className="h-7 pr-[9px] pl-2"><BoxIcon className="h-5 w-[22px]" />Master item 6</Tab>
                <Tab className="h-7 pr-1.5 pl-1.5"><HistoryIcon className="size-[21px]" />Item history (1)</Tab>
            </TabStrip>
            <div className="flex flex-1">
                <div className="flex w-14 flex-col items-center gap-[11px] pt-[17px]">
                    <button title="Edit"><PencilIcon className="size-[22px]" /></button>
                    <button title="Print"><PrinterIcon className="size-[22px]" /></button>
                    <button title="New window"><WindowIcon className="h-5 w-5" /></button>
                    <button title="Copy"><DocumentsIcon className="size-[22px]" /></button>
                </div>
                <div className="flex-1">
                    <div className="flex h-[41px] items-center gap-1.5 pt-2.5 pl-1.5"><BoxIcon className="size-5" />Cleaning spray</div>
                    <div className="flex">
                        <LabelColumn className="w-[82px]" labels={['Category:', 'Quantity:', 'Cost price:', 'Selling price:', 'Discount:']} />
                        <LabelColumn className="w-[135px]" labels={['Part number:', 'Item code:', 'Barcode:', 'Class number:', 'Worker:']} />
                    </div>
                </div>
                <div className="w-[443px] pt-[13px]">
                    <TabStrip>
                        <Tab active className="h-[23px] px-[7px]">Data</Tab>
                        <Tab className="h-[23px] px-[7px]">Description</Tab>
                        <Tab className="h-[23px] px-[7px]">Notes</Tab>
                    </TabStrip>
                    <div className="flex items-start gap-1 pt-0.5 pl-0.5">
                        <div className="grid h-[100px] flex-1 grid-cols-[210px_1fr] content-start border border-[#9297a1] pl-[5px] leading-[31px]">
                            <span>Source</span>
                            <span>Stock</span>
                            <span>Color</span>
                            <span>Shelf</span>
                            <span>Size</span>
                        </div>
                        <button title="Data settings" className="mr-[3px] flex size-[22px] items-center justify-center rounded-[4px] border border-[#6c7078] bg-linear-to-b from-white to-[#d9dce1]">
                            <SmallGearIcon className="size-3.5" />
                        </button>
                    </div>
                </div>
            </div>
        </div>
        <button className="flex w-7 flex-col items-center gap-[7px] pt-1.5 font-bold text-[#8a8a8a]">
            <ChevronDownIcon className="h-2.5 w-3.5" />
            <span className="leading-5 [writing-mode:vertical-rl]">Hide details</span>
        </button>
    </section>
);

const BottomBar: React.FC = () => (
    <footer className="mr-px mb-px flex h-[33px] border border-[#8f939b] shadow-[inset_0_1px_0_#fff]">
        <button className="my-0.5 ml-[3px] flex items-center gap-1 rounded-[5px] border border-[#6c7078] bg-linear-to-b from-[#f5f6f7] via-[#d9dce1] to-[#eceef0] pr-2.5 pl-3">
            <BasketIcon className="size-5" />
            Buy a license
        </button>
        <div className="ml-auto flex [&>span+span]:border-l [&>span+span]:border-[#9a9ea6]">
            <span className="flex items-center gap-1 pr-1.5"><UserIcon className="size-4" />Administrator</span>
            <span className="flex items-center gap-1 pr-1.5 pl-1"><ModeIcon className="h-3.5 w-4" />Standalone mode</span>
            <span className="flex items-center gap-1 pr-1.5 pl-1"><FlagIcon className="size-4" />English</span>
            <span className="flex items-center px-1">USD</span>
        </div>
    </footer>
);

const App: React.FC = () => (
    <div className="flex h-screen flex-col bg-[#d6d9df] font-['DejaVu_Sans',sans-serif] text-[13px] leading-4 text-black">
        <IconDefs />
        <TitleBar />
        <MainToolbar />
        <ItemToolbar />
        <main className="flex min-h-0 flex-1">
            <CategoryPanel />
            <div className="flex w-2.5 items-center justify-center border-x border-[#8f949e]">
                <span className="h-[18px] w-1 rounded-full border border-[#9a9ea6] bg-[#e2e4e8]" />
            </div>
            <StockPanel />
        </main>
        <div className="flex h-2.5 items-center justify-center border-y border-[#8f949e]">
            <span className="h-1 w-[18px] rounded-full border border-[#9a9ea6] bg-[#e2e4e8]" />
        </div>
        <DetailsPanel />
        <p className="h-6 px-[5px] leading-6 text-[#4c4f55]">Master item 6 | Created: Administrator, 27.08.2025 11:44</p>
        <BottomBar />
    </div>
);

export default App;
